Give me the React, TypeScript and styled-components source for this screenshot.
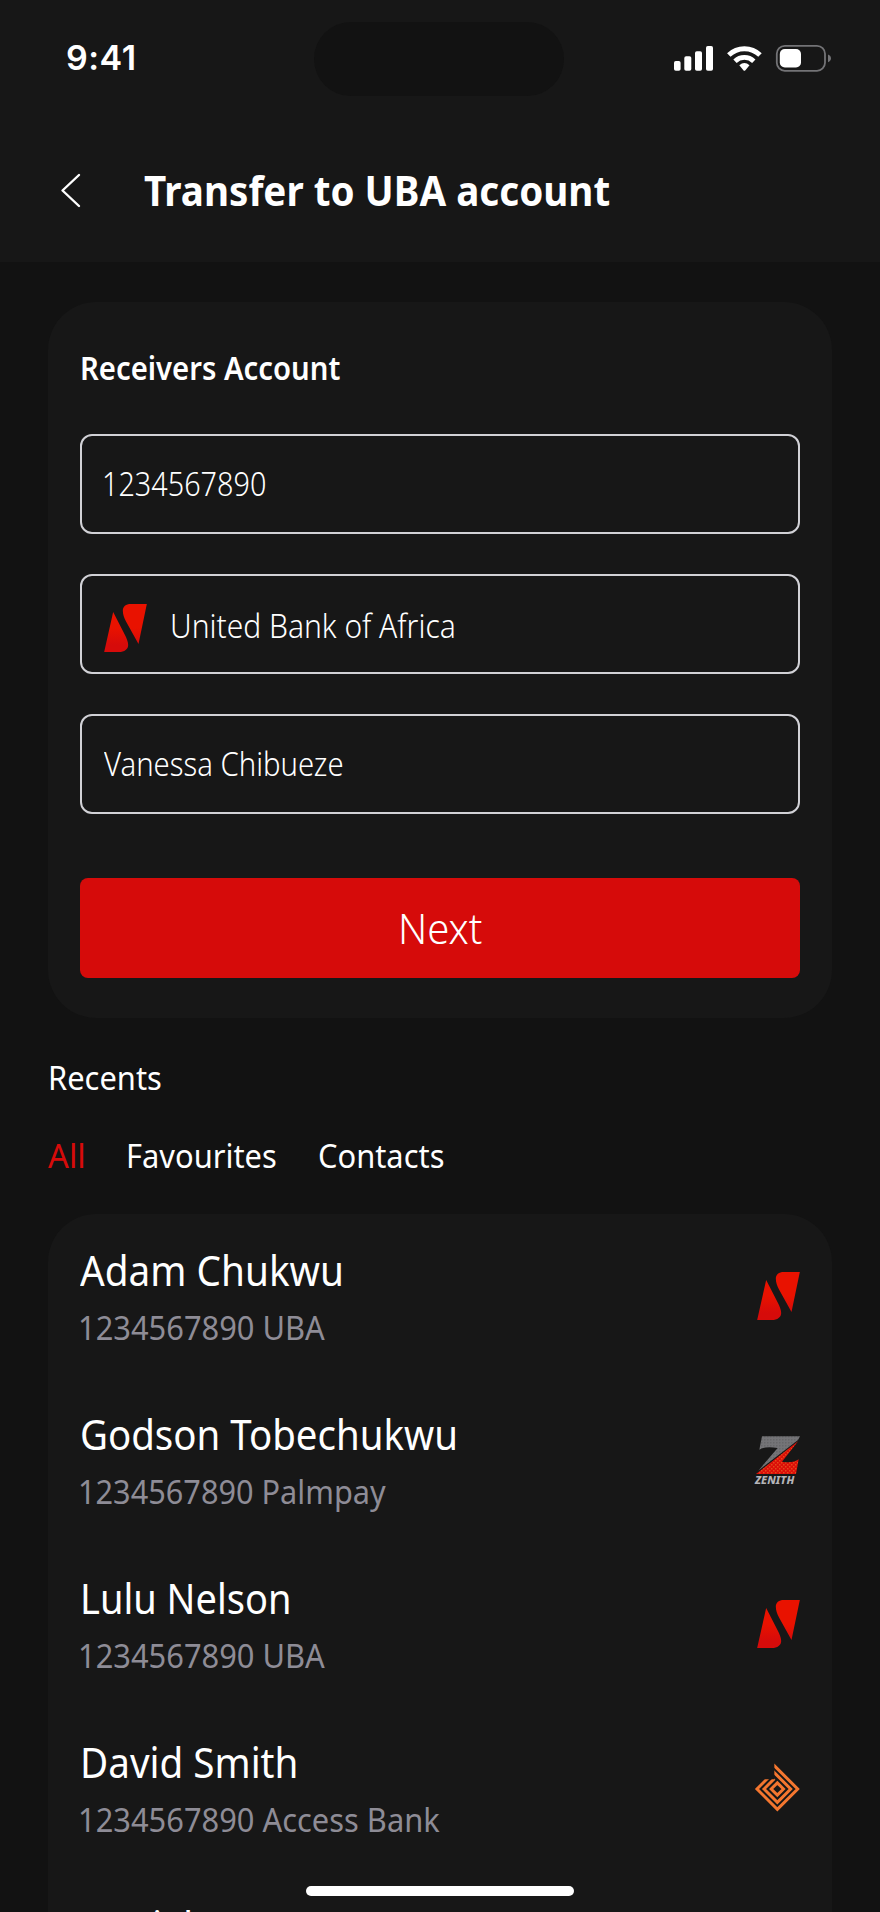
import React from "react";
import styled, { createGlobalStyle } from "styled-components";

const Global = createGlobalStyle`
  *, *::before, *::after { box-sizing: border-box; }
  body { margin: 0; background: #121212; }
`;

const Screen = styled.div`
  position: relative;
  width: 880px;
  height: 1912px;
  overflow: hidden;
  background: #121212;
  color: #fff;
  font-family: "Noto Sans", "Open Sans", sans-serif;
`;

const Header = styled.header`
  height: 262px;
  background: #171717;
`;

const StatusBar = styled.div`
  display: flex;
  align-items: flex-start;
  height: 118px;
  padding: 22px 48px 0 66px;
`;

const Clock = styled.time`
  width: 100px;
  margin-top: 12px;
  font: 600 34px/48px Inter, sans-serif;
  letter-spacing: 0.5px;
`;

const Island = styled.div`
  width: 250px;
  height: 74px;
  margin: 0 110px 0 148px;
  border-radius: 37px;
  background: #121212;
`;

const StatusIcons = styled.svg`
  display: block;
  width: 158px;
  height: 28px;
  margin-top: 22px;
`;

const NavBar = styled.div`
  display: flex;
  align-items: center;
  height: 144px;
  padding-left: 60px;
`;

const BackIcon = styled.svg`
  display: block;
  width: 22px;
  height: 36px;
  margin-right: 62px;
`;

const Label = styled.span<{ $fit?: number }>`
  display: inline-block;
  white-space: nowrap;
  transform: scaleX(${(p) => p.$fit ?? 0.92});
  transform-origin: left center;
`;

const Title = styled.h1`
  margin: 0;
  font-size: 42px;
  line-height: 56px;
  font-weight: 700;
`;

const Panel = styled.section`
  height: 716px;
  margin: 40px 48px 0;
  padding: 40px 32px;
  border-radius: 48px;
  background: #171717;
`;

const PanelTitle = styled.h2`
  margin: 0 0 40px;
  font-size: 33px;
  line-height: 52px;
  font-weight: 600;
`;

const Field = styled.div<{ $inset?: number }>`
  display: flex;
  align-items: center;
  gap: 23px;
  height: 100px;
  padding: 0 ${(p) => p.$inset ?? 22}px;
  border: 2px solid #d1d1d6;
  border-radius: 12px;
  font-size: 33px;
  line-height: 48px;
  font-weight: 340;

  & + & { margin-top: 40px; }
`;

const BankName = styled.div`
  margin-top: 4px;
`;

const NextButton = styled.button`
  display: flex;
  align-items: center;
  justify-content: center;
  width: 100%;
  height: 100px;
  margin-top: 64px;
  padding: 0;
  border: 0;
  border-radius: 8px;
  background: #d60b0a;
  color: #fff;
  font-family: inherit;
  font-size: 42px;
  line-height: 56px;
  font-weight: 340;

  ${Label} { transform-origin: center; }
`;

const SectionTitle = styled.h2`
  height: 48px;
  margin: 36px 48px 0;
  font-size: 33px;
  line-height: 48px;
  font-weight: 430;
`;

const Tabs = styled.nav`
  display: flex;
  height: 48px;
  margin: 30px 48px 0;
`;

const Tab = styled.span<{ $width: number; $active?: boolean }>`
  width: ${(p) => p.$width}px;
  color: ${(p) => (p.$active ? "#d60b0a" : "#fff")};
  font-size: 33px;
  line-height: 48px;
  font-weight: 430;
`;

const List = styled.ul`
  display: flex;
  flex-direction: column;
  gap: 51px;
  height: 900px;
  margin: 34px 48px 0;
  padding: 28px 32px 0;
  border-radius: 48px 48px 0 0;
  background: #171717;
  list-style: none;
`;

const Item = styled.li`
  display: flex;
  flex: none;
  align-items: center;
  justify-content: space-between;
  height: 113px;
`;

const Name = styled.div`
  font-size: 42px;
  line-height: 56px;
  font-weight: 420;
`;

const Account = styled.div`
  margin: 1px 0 0 -2px;
  color: #8e8c96;
  font-size: 33px;
  line-height: 57px;
  font-weight: 420;
`;

const UbaMark = styled.svg`
  display: block;
  flex: none;
  width: 43px;
  height: 48px;
  margin-bottom: 5px;
`;

const FieldMark = styled(UbaMark)`
  margin: 8px 0 0;
`;

const BankMark = styled.svg`
  display: block;
  flex: none;
  overflow: visible;
  width: 45px;
  height: 49px;
  margin-bottom: 5px;
`;

const HomeIndicator = styled.div`
  position: absolute;
  left: 306px;
  bottom: 16px;
  width: 268px;
  height: 10px;
  border-radius: 5px;
  background: #fff;
`;

const UbaShape = () => (
  <>
    <defs>
      <linearGradient id="uba" x1="0" y1="0" x2="0" y2="144" gradientUnits="userSpaceOnUse">
        <stop offset="0.5" stopColor="#e91200" />
        <stop offset="0.85" stopColor="#d60b0a" />
      </linearGradient>
    </defs>
    <path
      fill="url(#uba)"
      d="M27 24L0 144H44C61 144 72 136 72 123C72 113 67 102 62 92ZM128 0H80C65 0 56 8 56 20C56 31 60 42 66 53L103 120Z"
    />
  </>
);

const Uba = () => (
  <UbaMark viewBox="0 0 128 144">
    <UbaShape />
  </UbaMark>
);

const Zenith = () => (
  <BankMark viewBox="0 0 135 147">
    <defs>
      <pattern id="greyDots" width="9" height="9" patternUnits="userSpaceOnUse">
        <rect width="9" height="9" fill="#747477" />
        <rect x="1" y="1" width="3" height="3" fill="#565658" />
      </pattern>
      <pattern id="redDots" width="12" height="12" patternUnits="userSpaceOnUse">
        <rect width="12" height="12" fill="#dc0d08" />
        <rect x="1" y="1" width="3" height="3" fill="#f09030" />
        <rect x="7" y="7" width="3" height="3" fill="#f09030" />
      </pattern>
    </defs>
    <path fill="url(#greyDots)" d="M21 1H135L129 12L10 104L68 36Q32 29 13 41Z" />
    <path fill="url(#redDots)" d="M129 16L81 77Q114 83 131 70L123 114H3Z" />
    <text
      x="0"
      y="144"
      textLength="118"
      lengthAdjust="spacingAndGlyphs"
      fill="#b4b4b8"
      fontFamily="Noto Sans, sans-serif"
      fontSize="33"
      fontWeight="800"
      fontStyle="italic"
    >
      ZENITH
    </text>
  </BankMark>
);

const Access = () => (
  <BankMark viewBox="0 0 135 147">
    <defs>
      <clipPath id="accessCut">
        <path d="M58 -2H140V147H-5V46H58Z" />
      </clipPath>
    </defs>
    <g fill="none" stroke="#f4762f" strokeWidth="9" clipPath="url(#accessCut)">
      <path d="M48 -5L128 75L67 136L6 75L42 39" />
      <path d="M48 16L107 75L67 115L27 75L58 44" />
      <path d="M67 56.5L85.5 75L67 93.5L48.5 75Z" />
    </g>
  </BankMark>
);

const recents = [
  { name: "Adam Chukwu", account: "1234567890 UBA", nameFit: 0.922, fit: 0.935, Mark: Uba },
  { name: "Godson Tobechukwu", account: "1234567890 Palmpay", nameFit: 0.915, fit: 0.93, Mark: Zenith },
  { name: "Lulu Nelson", account: "1234567890 UBA", nameFit: 0.905, fit: 0.935, Mark: Uba },
  { name: "David Smith", account: "1234567890 Access Bank", nameFit: 0.92, fit: 0.935, Mark: Access },
  { name: "Daniel", account: "1234567890 UBA", nameFit: 0.9, fit: 0.935, Mark: Uba },
];

export default function App() {
  return (
    <Screen>
      <Global />
      <Header>
        <StatusBar>
          <Clock>9:41</Clock>
          <Island />
          <StatusIcons viewBox="0 0 158 28">
            <g fill="#fff">
              <rect x="0" y="17" width="6.6" height="9.8" rx="1.8" />
              <rect x="10.3" y="12.3" width="7" height="14.5" rx="1.8" />
              <rect x="21" y="7.3" width="7" height="19.5" rx="1.8" />
              <rect x="32" y="2" width="7" height="24.8" rx="1.8" />
            </g>
            <g fill="none" stroke="#fff">
              <path strokeWidth="5" d="M54.8 11A22.5 22.5 0 0 1 86 11" />
              <path strokeWidth="4.8" d="M61 17.2A13.6 13.6 0 0 1 79.8 17.2" />
            </g>
            <path fill="#fff" d="M65.3 21.2Q70.4 17 75.5 21.2L71.4 26.2Q70.4 27.2 69.4 26.2Z" />
            <rect x="102.8" y="1.8" width="48.2" height="25" rx="8" fill="none" stroke="#737376" strokeWidth="1.8" />
            <rect x="105.8" y="5" width="21.2" height="18.4" rx="5" fill="#fff" />
            <path fill="#737376" d="M154 10.4Q157 11.6 157 14.3T154 18.2Z" />
          </StatusIcons>
        </StatusBar>
        <NavBar>
          <BackIcon viewBox="0 0 22 36" fill="none" stroke="#fff" strokeWidth="2.4" strokeLinecap="round" strokeLinejoin="round">
            <path d="M19 3L2.5 18.5L19 34" />
          </BackIcon>
          <Title><Label $fit={0.919}>Transfer to UBA account</Label></Title>
        </NavBar>
      </Header>

      <Panel>
        <PanelTitle><Label $fit={0.887}>Receivers Account</Label></PanelTitle>
        <Field $inset={20}><Label $fit={0.872}>1234567890</Label></Field>
        <Field>
          <FieldMark viewBox="0 0 128 144"><UbaShape /></FieldMark>
          <BankName><Label $fit={0.908}>United Bank of Africa</Label></BankName>
        </Field>
        <Field><Label $fit={0.887}>Vanessa Chibueze</Label></Field>
        <NextButton><Label $fit={0.955}>Next</Label></NextButton>
      </Panel>

      <SectionTitle><Label $fit={0.935}>Recents</Label></SectionTitle>
      <Tabs>
        <Tab $width={78} $active><Label $fit={0.99}>All</Label></Tab>
        <Tab $width={192}><Label $fit={0.935}>Favourites</Label></Tab>
        <Tab $width={130}><Label $fit={0.935}>Contacts</Label></Tab>
      </Tabs>

      <List>
        {recents.map(({ name, account, nameFit, fit, Mark }, i) => (
          <Item key={i}>
            <div>
              <Name><Label $fit={nameFit}>{name}</Label></Name>
              <Account><Label $fit={fit}>{account}</Label></Account>
            </div>
            <Mark />
          </Item>
        ))}
      </List>
      <HomeIndicator />
    </Screen>
  );
}
